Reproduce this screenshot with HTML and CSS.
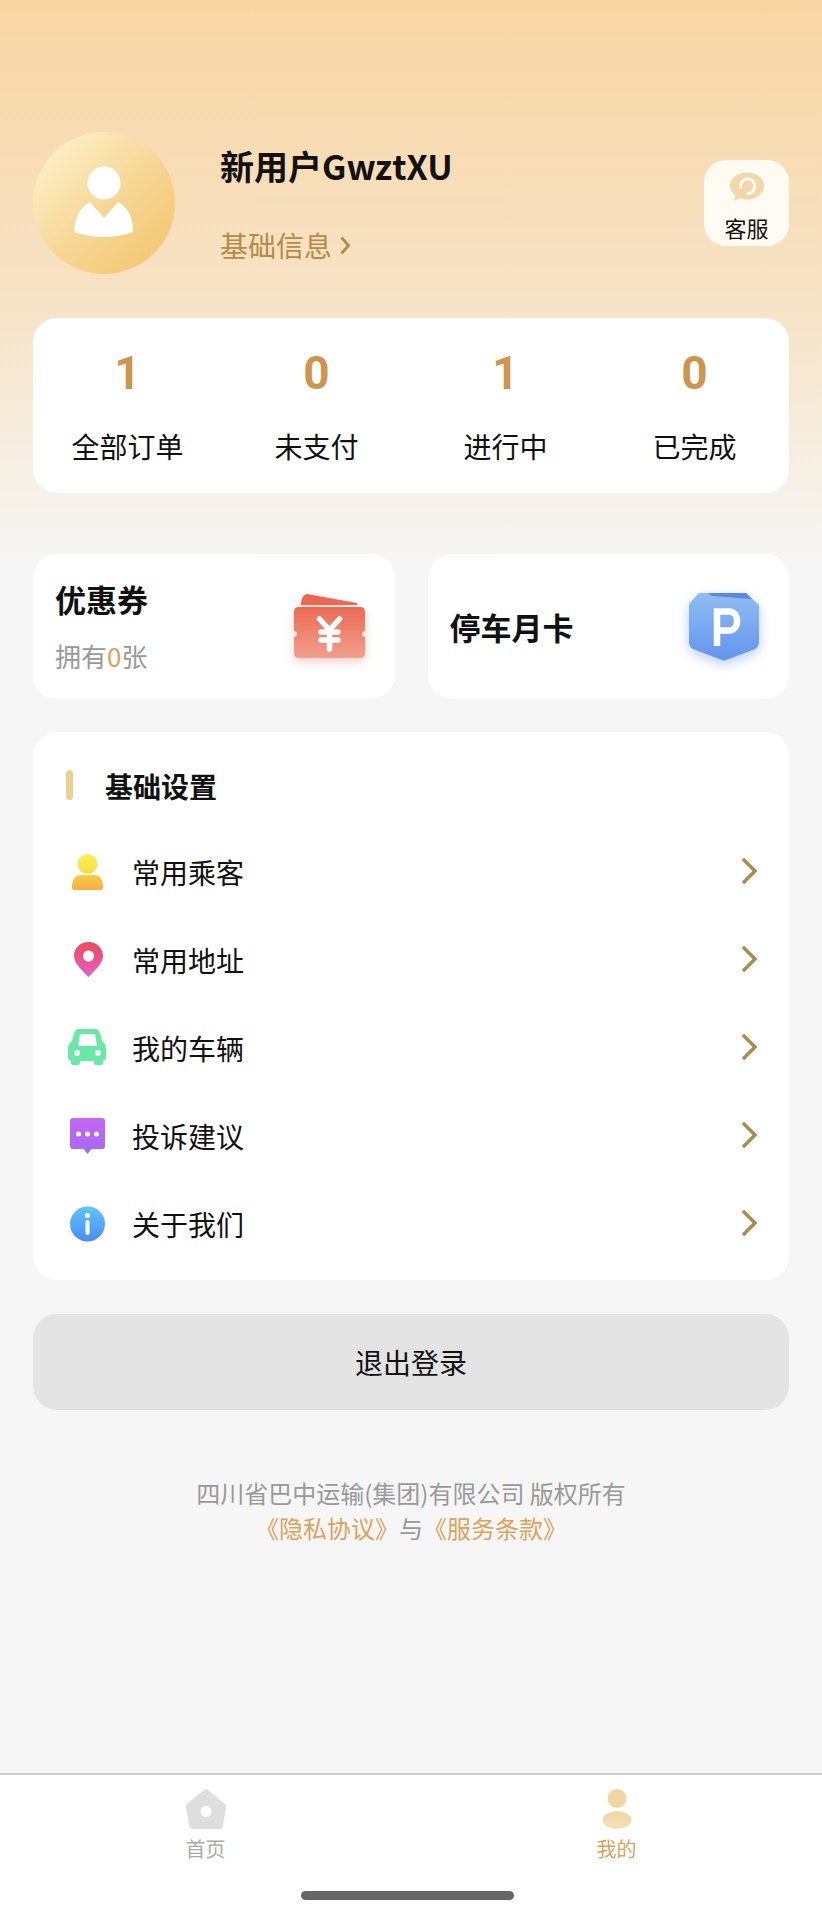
FILE: index.html
```html
<!DOCTYPE html>
<html lang="zh-CN">
<head>
  <meta charset="UTF-8">
  <meta name="viewport" content="width=device-width, initial-scale=1.0">
  <title>我的</title>
  <link rel="stylesheet" href="styles.css">
</head>
<body>
  <div id="page">
    <div id="main">
      <!-- User header -->
      <div class="header">
        <div class="avatar">
          <svg width="142" height="142" viewBox="0 0 142 142">
            <circle cx="71" cy="51" r="16.500" fill="#fff"/>
            <path d="M57 70L71 86L85 70Q100 78 100 100Q71 110 41 100Q42 78 57 70Z" fill="#fff"/>
          </svg>
        </div>
        <div class="user-info">
          <div class="user-name">新用户GwztXU</div>
          <div class="user-link">基础信息<svg class="user-arrow" width="10" height="19" viewBox="0 0 10 19"><path d="M1.500 1.500L8.500 9.500L1.500 17.500" fill="none" stroke="#b58a45" stroke-width="2.800"/></svg></div>
        </div>
        <div class="service-btn">
          <svg width="36" height="30" viewBox="0 0 36 30">
            <path d="M18 0.500C27.500 0.500 35 6.500 35 14C35 21.500 27.500 27.500 18 27.500C15.500 27.500 13 27 11 26.200L4.500 29L6.500 23.500C3 21 1 17.700 1 14C1 6.500 8.500 0.500 18 0.500Z" fill="#f3d7a8"/>
            <path d="M11.500 16.500C10.800 11 14 6.800 18.500 6.800C23 6.800 26 10.500 25.500 15C25 19.500 22 21.500 18 21.500" fill="none" stroke="#fff" stroke-width="2.800"/>
          </svg>
          <span class="service-label">客服</span>
        </div>
      </div>

      <!-- Order counts -->
      <div class="orders card">
        <div class="order-item"><div class="order-num">1</div><div class="order-label">全部订单</div></div>
        <div class="order-item"><div class="order-num">0</div><div class="order-label">未支付</div></div>
        <div class="order-item"><div class="order-num">1</div><div class="order-label">进行中</div></div>
        <div class="order-item"><div class="order-num">0</div><div class="order-label">已完成</div></div>
      </div>

      <!-- Coupon and parking -->
      <div class="promo-row">
        <div class="promo card">
          <div class="promo-text">
            <div class="promo-title">优惠券</div>
            <div class="promo-sub">拥有<span class="promo-count">0</span>张</div>
          </div>
          <svg class="promo-icon ticket" width="76" height="72" viewBox="0 0 76 72">
            <defs>
              <linearGradient id="ticketFill" x1="0" y1="0" x2="0" y2="1">
                <stop offset="0" stop-color="#ea6a55"/>
                <stop offset="1" stop-color="#f29f8d"/>
              </linearGradient>
            </defs>
            <path d="M11 13C11 8 13 4 17 3L67 12V14H11Z" fill="#ec6653"/>
            <path d="M9 16H70Q75 16 75 21V40A3 3 0 0 0 75 46V62Q75 67 70 67H9Q4 67 4 62V46A3 3 0 0 0 4 40V21Q4 16 9 16Z" fill="url(#ticketFill)"/>
            <path d="M29.500 28L39.500 39L49.500 28M31 41H48M31 49H48M39.500 39V58" fill="none" stroke="#fff" stroke-width="5.500" stroke-linecap="round" stroke-linejoin="round"/>
          </svg>
        </div>
        <div class="promo card">
          <div class="promo-title">停车月卡</div>
          <svg class="promo-icon parking" width="72" height="70" viewBox="0 0 72 70">
            <defs>
              <linearGradient id="parkFill" x1="0" y1="0" x2="0" y2="1">
                <stop offset="0" stop-color="#8fbdf3"/>
                <stop offset="1" stop-color="#6494ec"/>
              </linearGradient>
            </defs>
            <path d="M12 1H58L71 13V50Q71 55 67 57L38 68Q36 69 34 68L5 57Q1 55 1 50V13Q1 12 2 11L10 2Q11 1 12 1Z" fill="url(#parkFill)"/>
            <path d="M20 1H58L64 7L24 4Z" fill="#5f86e0"/>
            <path d="M29 54V19.500H41C46 19.500 49 23.500 49 29C49 34.500 46 38.500 41 38.500H29" fill="none" stroke="#fff" stroke-width="6.500"/>
          </svg>
        </div>
      </div>

      <!-- Settings list -->
      <div class="settings card">
        <div class="settings-head">
          <span class="settings-bar"></span>
          <span class="settings-title">基础设置</span>
        </div>
        <div class="settings-row">
          <svg class="row-icon" width="40" height="40" viewBox="0 0 40 40">
            <defs>
              <linearGradient id="headFill" x1="0" y1="0" x2="0" y2="1">
                <stop offset="0" stop-color="#f9f059"/>
                <stop offset="1" stop-color="#f6dc45"/>
              </linearGradient>
              <linearGradient id="personFill" x1="0" y1="0" x2="0" y2="1">
                <stop offset="0" stop-color="#f5cf45"/>
                <stop offset="1" stop-color="#f3ae3e"/>
              </linearGradient>
            </defs>
            <circle cx="20.500" cy="12" r="10" fill="url(#headFill)"/>
            <path d="M13 23H28C33 23 36 28 36 35Q36 38 34 38H7Q5 38 5 35C5 28 8 23 13 23Z" fill="url(#personFill)"/>
          </svg>
          <span class="row-label">常用乘客</span>
          <svg class="row-arrow" width="18" height="30" viewBox="0 0 18 30"><path d="M3 3L15 15L3 27" fill="none" stroke="#ac8b4e" stroke-width="3.500"/></svg>
        </div>
        <div class="settings-row">
          <svg class="row-icon" width="40" height="40" viewBox="0 0 40 40">
            <defs>
              <linearGradient id="pinFill" x1="0" y1="0" x2="0" y2="1">
                <stop offset="0" stop-color="#ee4c58"/>
                <stop offset="1" stop-color="#e65cc8"/>
              </linearGradient>
            </defs>
            <path fill-rule="evenodd" d="M21.500 2C29.500 2 36 8 36 16C36 24 27 31 21.500 37C16 31 7 24 7 16C7 8 13.500 2 21.500 2ZM21.500 10.500A5.500 5.500 0 1 0 21.500 21.500A5.500 5.500 0 1 0 21.500 10.500Z" fill="url(#pinFill)"/>
          </svg>
          <span class="row-label">常用地址</span>
          <svg class="row-arrow" width="18" height="30" viewBox="0 0 18 30"><path d="M3 3L15 15L3 27" fill="none" stroke="#ac8b4e" stroke-width="3.500"/></svg>
        </div>
        <div class="settings-row">
          <svg class="row-icon" width="40" height="40" viewBox="0 0 40 40">
            <path fill-rule="evenodd" d="M12 1H28C31 1 32 3 33 5L35 13C38 15 39 18 39 21V29Q39 32 36 33V35Q36 37 33 37H29Q27 37 27 35V33H13V35Q13 37 11 37H7Q4 37 4 35V33Q1 32 1 29V21C1 18 2 15 5 13L7 5C8 3 9 1 12 1ZM13 6L11 18H30L28 6ZM10 22A3 3 0 1 0 10 28A3 3 0 1 0 10 22ZM31 22A3 3 0 1 0 31 28A3 3 0 1 0 31 22Z" fill="#69e9a5"/>
          </svg>
          <span class="row-label">我的车辆</span>
          <svg class="row-arrow" width="18" height="30" viewBox="0 0 18 30"><path d="M3 3L15 15L3 27" fill="none" stroke="#ac8b4e" stroke-width="3.500"/></svg>
        </div>
        <div class="settings-row">
          <svg class="row-icon" width="40" height="40" viewBox="0 0 40 40">
            <defs>
              <linearGradient id="chatFill" x1="0" y1="0" x2="0" y2="1">
                <stop offset="0" stop-color="#c666f5"/>
                <stop offset="1" stop-color="#a46af0"/>
              </linearGradient>
            </defs>
            <path d="M6 2H35Q38 2 38 5V30Q38 33 35 33H24.500L20.500 38L16.500 33H6Q3 33 3 30V5Q3 2 6 2Z" fill="url(#chatFill)"/>
            <circle cx="11.500" cy="18" r="2.500" fill="#fff"/>
            <circle cx="20.500" cy="18" r="2.500" fill="#fff"/>
            <circle cx="29.500" cy="18" r="2.500" fill="#fff"/>
          </svg>
          <span class="row-label">投诉建议</span>
          <svg class="row-arrow" width="18" height="30" viewBox="0 0 18 30"><path d="M3 3L15 15L3 27" fill="none" stroke="#ac8b4e" stroke-width="3.500"/></svg>
        </div>
        <div class="settings-row">
          <svg class="row-icon" width="40" height="40" viewBox="0 0 40 40">
            <defs>
              <linearGradient id="infoFill" x1="0" y1="0" x2="0" y2="1">
                <stop offset="0" stop-color="#5fc6f8"/>
                <stop offset="1" stop-color="#4b8bf6"/>
              </linearGradient>
            </defs>
            <circle cx="20.500" cy="20" r="17.500" fill="url(#infoFill)"/>
            <circle cx="20.500" cy="11.500" r="2.500" fill="#fff"/>
            <rect x="18.500" y="16" width="4" height="15" rx="2" fill="#fff"/>
          </svg>
          <span class="row-label">关于我们</span>
          <svg class="row-arrow" width="18" height="30" viewBox="0 0 18 30"><path d="M3 3L15 15L3 27" fill="none" stroke="#ac8b4e" stroke-width="3.500"/></svg>
        </div>
      </div>

      <button class="logout-btn">退出登录</button>

      <div class="footer">
        <div>四川省巴中运输(集团)有限公司 版权所有</div>
        <div><span class="footer-link">《隐私协议》</span>与<span class="footer-link">《服务条款》</span></div>
      </div>
    </div>

    <!-- Bottom tabs -->
    <div class="tabbar">
      <div class="tabs">
        <div class="tab">
          <svg width="42" height="40" viewBox="0 0 42 40">
            <path fill-rule="evenodd" d="M21 0Q22 0 23 1L40 15Q41 16 41 18L38 36Q38 40 34 40H8Q4 40 4 36L1 18Q1 16 2 15L19 1Q20 0 21 0ZM21 17A5.500 5.500 0 1 0 21 28A5.500 5.500 0 1 0 21 17Z" fill="#dedede"/>
          </svg>
          <span class="tab-label">首页</span>
        </div>
        <div class="tab tab-active">
          <svg width="42" height="40" viewBox="0 0 42 40">
            <defs>
              <linearGradient id="meFill" x1="0" y1="0" x2="0" y2="1">
                <stop offset="0" stop-color="#f2d6a2"/>
                <stop offset="1" stop-color="#f5dfb6"/>
              </linearGradient>
            </defs>
            <circle cx="21" cy="9.500" r="9.500" fill="#f2d6a2"/>
            <ellipse cx="21" cy="31" rx="14.500" ry="9" fill="url(#meFill)"/>
          </svg>
          <span class="tab-label">我的</span>
        </div>
      </div>
      <div class="home-bar"></div>
    </div>
  </div>
</body>
</html>
```

FILE: styles.css
```css
* {
  box-sizing: border-box;
}

body {
  margin: 0;
  font-family: 'Noto Sans CJK SC', 'Liberation Sans', sans-serif;
  color: #111;
}

#page {
  display: flex;
  flex-direction: column;
  justify-content: space-between;
  height: 1920px;
  overflow: hidden;
  background: linear-gradient(to bottom, #f8d5a3 0, #f7e3c6 300px, #f6f0e6 480px, #f6f6f6 560px);
}

#main {
  padding: 132px 33px 0;
}

.card {
  background: #fff;
  border-radius: 24px;
}

/* header */
.header {
  display: flex;
  height: 142px;
}

.avatar {
  flex: none;
  width: 142px;
  height: 142px;
  border-radius: 50%;
  background: linear-gradient(135deg, #fdf0c8 10%, #f6d592 55%, #f4c873 90%);
}

.avatar svg {
  display: block;
}

.user-info {
  margin-left: 45px;
  padding-top: 12px;
}

.user-name {
  font-size: 34px;
  line-height: 44px;
  font-weight: 700;
}

.user-link {
  display: flex;
  align-items: center;
  margin-top: 37px;
  font-size: 28px;
  line-height: 40px;
  color: #b58a45;
}

.user-arrow {
  margin-left: 8px;
}

.service-btn {
  display: flex;
  flex-direction: column;
  align-items: center;
  width: 85px;
  height: 86px;
  margin: 28px 0 0 auto;
  padding-top: 12px;
  background: #fffaf2;
  border-radius: 22px;
}

.service-btn svg {
  flex: none;
}

.service-label {
  margin-top: 10px;
  font-size: 22px;
  line-height: 30px;
}

/* orders */
.orders {
  display: grid;
  grid-template-columns: repeat(4, 1fr);
  height: 175px;
  margin-top: 44px;
  padding-top: 25px;
  text-align: center;
}

.order-num {
  font-family: Roboto, sans-serif;
  font-size: 46px;
  line-height: 60px;
  font-weight: 700;
  color: #cf9550;
}

.order-label {
  margin-top: 23px;
  font-size: 28px;
  line-height: 40px;
}

/* coupon + parking */
.promo-row {
  display: grid;
  grid-template-columns: 1fr 1fr;
  gap: 33px;
  margin-top: 61px;
}

.promo {
  display: flex;
  align-items: center;
  justify-content: space-between;
  height: 145px;
  padding: 0 29px 0 22px;
}

.promo-text {
  margin-bottom: 3px;
}

.promo-title {
  font-size: 31px;
  line-height: 44px;
  font-weight: 700;
}

.promo-sub {
  margin-top: 17px;
  font-size: 26px;
  line-height: 36px;
  color: #999;
}

.promo-count {
  color: #dba35c;
}

.ticket {
  filter: drop-shadow(0 4px 5px rgba(236, 102, 83, 0.3));
}

.parking {
  filter: drop-shadow(0 4px 6px rgba(100, 148, 236, 0.45));
}

/* settings */
.settings {
  margin-top: 33px;
  height: 548px;
  padding-top: 38px;
}

.settings-head {
  display: flex;
  align-items: center;
  height: 30px;
  padding-left: 33px;
}

.settings-bar {
  width: 7px;
  height: 30px;
  border-radius: 4px;
  background: #eed095;
}

.settings-title {
  margin-left: 32px;
  padding-top: 2px;
  font-size: 28px;
  line-height: 36px;
  font-weight: 700;
}

.settings-row {
  display: flex;
  align-items: center;
  height: 88px;
  padding: 0 31px 0 34px;
}

.settings-head + .settings-row {
  margin-top: 28px;
}

.row-icon {
  flex: none;
}

.row-label {
  margin-left: 25px;
  font-size: 28px;
}

.row-arrow {
  flex: none;
  margin-top: -2px;
  margin-left: auto;
}

/* logout + footer */
.logout-btn {
  display: block;
  width: 100%;
  height: 96px;
  margin-top: 34px;
  border: none;
  border-radius: 24px;
  background: #e4e4e4;
  color: #111;
  font-family: inherit;
  font-size: 28px;
}

.footer {
  margin-top: 65px;
  text-align: center;
  font-size: 24px;
  line-height: 35px;
  color: #999;
}

.footer-link {
  color: #dba35c;
}

/* tab bar */
.tabbar {
  height: 147px;
  padding-top: 14px;
  background: #fff;
  border-top: 2px solid #ccc;
}

.tabs {
  display: grid;
  grid-template-columns: 1fr 1fr;
}

.tab {
  display: flex;
  flex-direction: column;
  align-items: center;
  font-size: 20px;
  color: #aaa;
}

.tab-label {
  margin-top: 5px;
  line-height: 30px;
}

.tab-active {
  color: #dba35c;
}

.home-bar {
  width: 213px;
  height: 9px;
  margin: 27px 0 0 301px;
  border-radius: 5px;
  background: #666;
}
```
